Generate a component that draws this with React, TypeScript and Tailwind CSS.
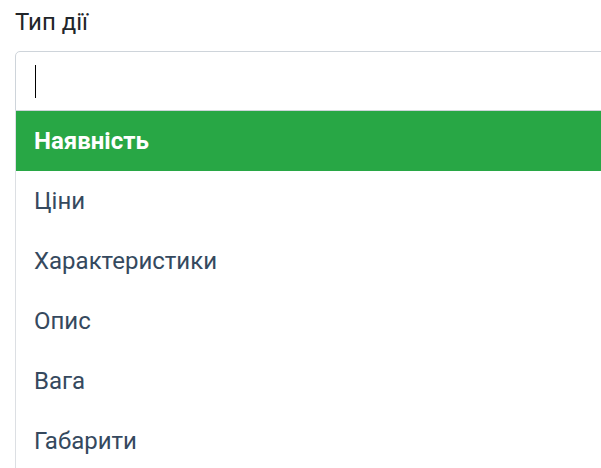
const options = ['Наявність', 'Ціни', 'Характеристики', 'Опис', 'Вага', 'Габарити'];

export default function App() {
  return (
    <div className="w-[601px] h-[468px] overflow-hidden bg-white font-['Roboto',sans-serif]">
      <div className="pl-[15px] pt-[4px] w-[640px]">
        <label className="block text-[24px] leading-[36px] text-[#212529] mb-[11px]">Тип дії</label>
        <div className="h-[60px] border border-[#ced4da] rounded-tl-[5px] bg-white flex items-center pl-[19px]">
          <span className="block w-px h-[33px] bg-black" />
        </div>
        <ul className="border-l border-[#dcdfe3]">
          {options.map((o, i) => (
            <li
              key={o}
              className={
                i === 0
                  ? 'h-[60px] flex items-center pl-[18px] text-[24px] font-bold text-white bg-[#28a745]'
                  : 'h-[60px] flex items-center pl-[18px] text-[24px] text-[#35495e]'
              }
            >
              {o}
            </li>
          ))}
        </ul>
      </div>
    </div>
  );
}
